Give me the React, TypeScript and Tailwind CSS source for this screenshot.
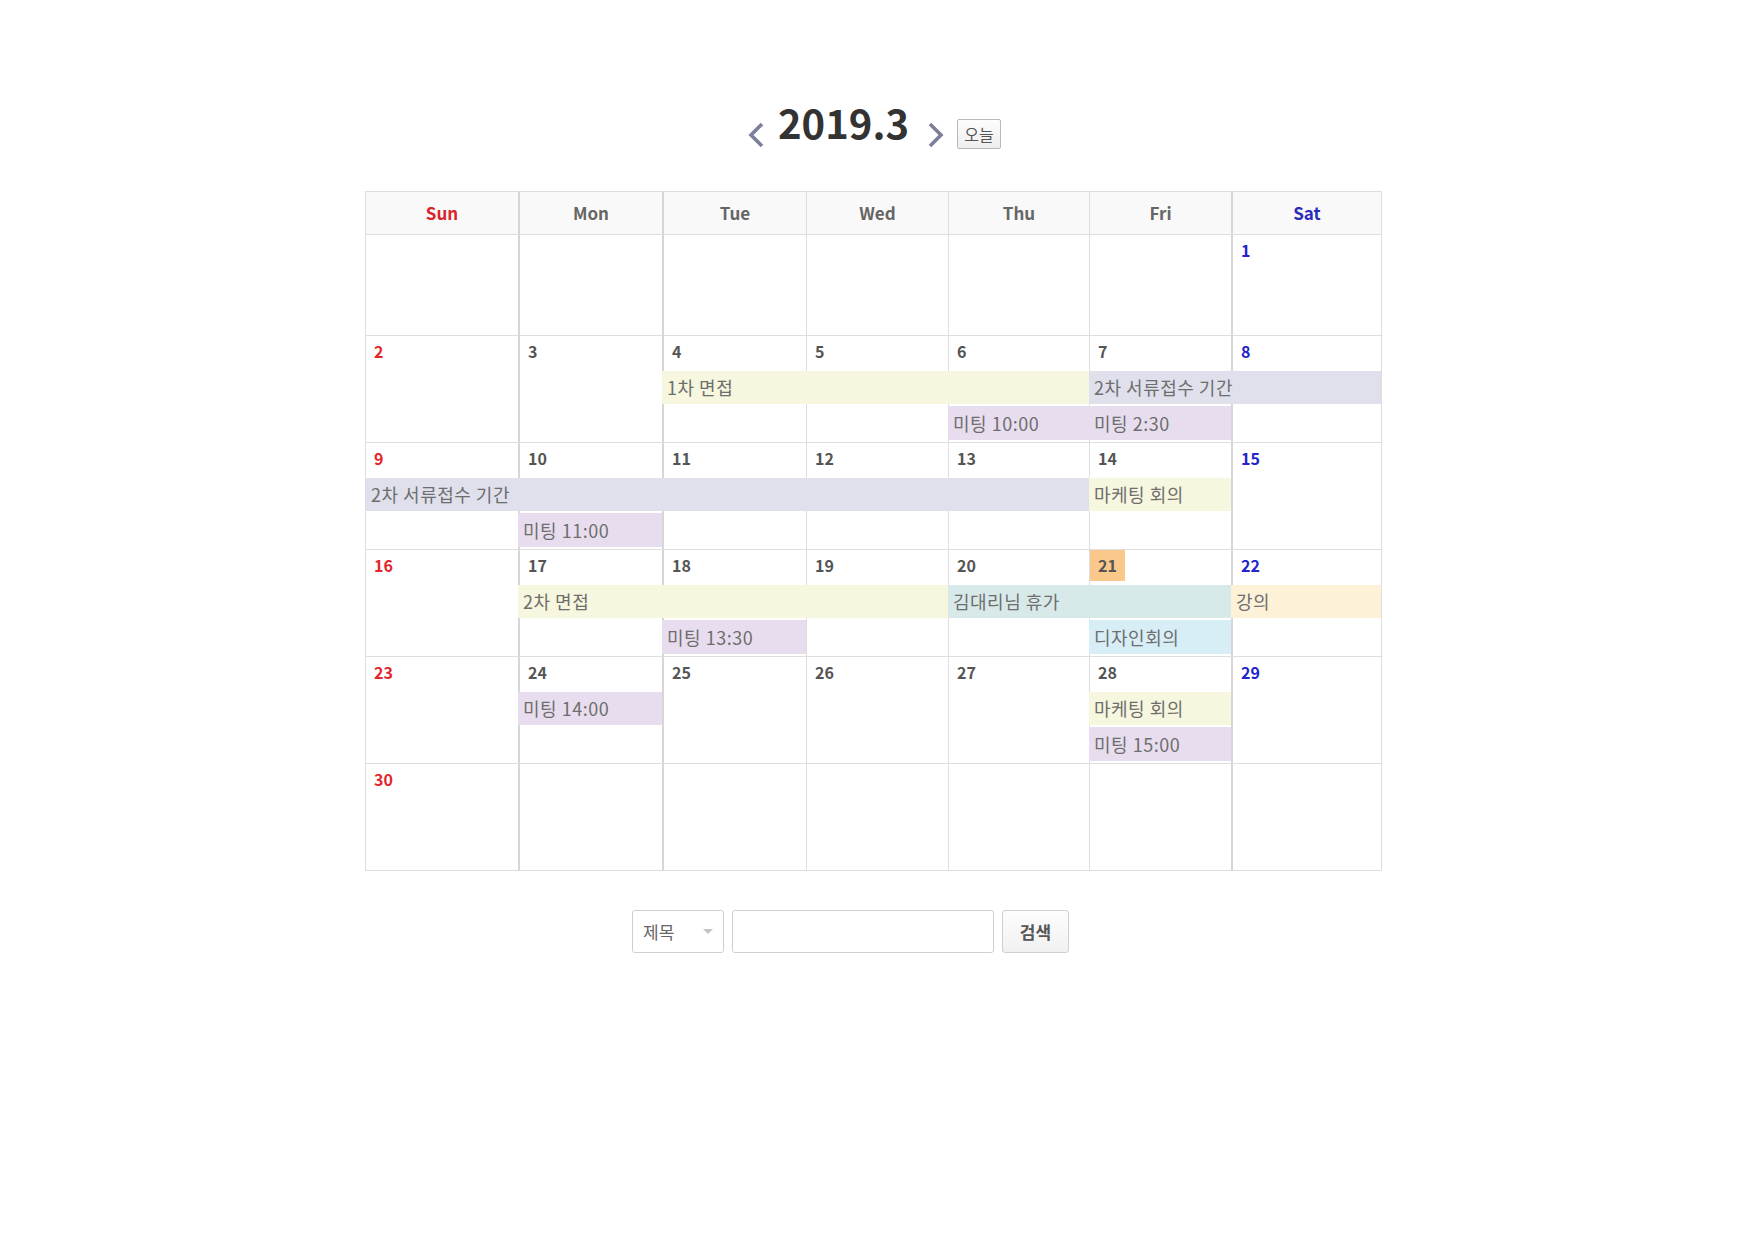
type CalEvent = { title: string; start: number; span: number; slot: 1 | 2; color: string };
type Week = { days: (number | null)[]; h: string; events: CalEvent[] };

const colStart = ["", "col-start-1", "col-start-2", "col-start-3", "col-start-4", "col-start-5", "col-start-6", "col-start-7"];
const colSpan = ["", "col-span-1", "col-span-2", "col-span-3", "col-span-4", "col-span-5"];

const yellow = "bg-[#f6f7de]";
const lavender = "bg-[#dfe0ec]";
const pink = "bg-[#e8ddee]";
const teal = "bg-[#d8e9e9]";
const sky = "bg-[#d7eef7]";
const peach = "bg-[#fdf2d8]";

const weeks: Week[] = [
  { days: [null, null, null, null, null, null, 1], h: "h-[100px]", events: [] },
  {
    days: [2, 3, 4, 5, 6, 7, 8],
    h: "h-[107px] border-t",
    events: [
      { title: "1차 면접", start: 3, span: 3, slot: 1, color: yellow },
      { title: "2차 서류접수 기간", start: 6, span: 2, slot: 1, color: lavender },
      { title: "미팅 10:00", start: 5, span: 1, slot: 2, color: pink },
      { title: "미팅 2:30", start: 6, span: 1, slot: 2, color: pink },
    ],
  },
  {
    days: [9, 10, 11, 12, 13, 14, 15],
    h: "h-[107px] border-t",
    events: [
      { title: "2차 서류접수 기간", start: 1, span: 5, slot: 1, color: lavender },
      { title: "마케팅 회의", start: 6, span: 1, slot: 1, color: yellow },
      { title: "미팅 11:00", start: 2, span: 1, slot: 2, color: pink },
    ],
  },
  {
    days: [16, 17, 18, 19, 20, 21, 22],
    h: "h-[107px] border-t",
    events: [
      { title: "2차 면접", start: 2, span: 3, slot: 1, color: yellow },
      { title: "김대리님 휴가", start: 5, span: 2, slot: 1, color: teal },
      { title: "강의", start: 7, span: 1, slot: 1, color: peach },
      { title: "미팅 13:30", start: 3, span: 1, slot: 2, color: pink },
      { title: "디자인회의", start: 6, span: 1, slot: 2, color: sky },
    ],
  },
  {
    days: [23, 24, 25, 26, 27, 28, 29],
    h: "h-[107px] border-t",
    events: [
      { title: "미팅 14:00", start: 2, span: 1, slot: 1, color: pink },
      { title: "마케팅 회의", start: 6, span: 1, slot: 1, color: yellow },
      { title: "미팅 15:00", start: 6, span: 1, slot: 2, color: pink },
    ],
  },
  { days: [30, null, null, null, null, null, null], h: "h-[107px] border-t", events: [] },
];

const dayNames = ["Sun", "Mon", "Tue", "Wed", "Thu", "Fri", "Sat"];

// left border per column: Mon, Tue and Sat lines are a bit heavier
const colBorder = [
  "",
  "border-l-2 border-[#d6d6d6]",
  "border-l-2 border-[#d6d6d6]",
  "border-l border-[#dedede]",
  "border-l border-[#dedede]",
  "border-l border-[#dedede]",
  "border-l-2 border-[#d6d6d6]",
];

const gridCols = "grid grid-cols-[152px_144px_144px_142px_141px_142px_150px]";

function dateColor(col: number) {
  if (col === 0) return "text-[#e3262b]";
  if (col === 6) return "text-[#2424cc]";
  return "text-[#555]";
}

function ChevronLeft() {
  return (
    <svg className="h-[26px] w-[16px]" viewBox="0 0 16 26" fill="none" stroke="#7b7f9b" strokeWidth={3.6}>
      <polyline points="14,2 3,13 14,24" />
    </svg>
  );
}

function ChevronRight() {
  return (
    <svg className="h-[26px] w-[16px]" viewBox="0 0 16 26" fill="none" stroke="#7b7f9b" strokeWidth={3.6}>
      <polyline points="2,2 13,13 2,24" />
    </svg>
  );
}

export default function App() {
  return (
    <div className="min-h-[1240px] bg-white pt-[102px] font-['Noto_Sans_CJK_KR','Noto_Sans',sans-serif] text-[#555]">
      {/* month header */}
      <div className="flex h-[50px] items-start justify-center pr-[6px]">
        <div className="mt-[20px] mr-[14px]">
          <ChevronLeft />
        </div>
        <div className="text-[40px] font-bold leading-[40px] text-[#333]">2019.3</div>
        <div className="mt-[20px] ml-[19px]">
          <ChevronRight />
        </div>
        <button className="mt-[17px] ml-[13px] flex h-[30px] w-[44px] items-center justify-center rounded-[2px] border border-[#b8b8b8] bg-gradient-to-b from-[#fdfdfd] to-[#eeeeee] text-[16px] text-[#555]">
          오늘
        </button>
      </div>

      {/* calendar */}
      <div className="mt-[39px] flex justify-center pr-[8px]">
        <div className="w-[1017px] border border-[#dedede]">
          <div className={`${gridCols} h-[43px] border-b border-[#dedede] bg-[#f9f9f9]`}>
            {dayNames.map((d, i) => (
              <div
                key={d}
                className={`flex items-center justify-center text-[17px] font-semibold ${colBorder[i]} ${
                  i === 0 ? "text-[#d6262b]" : i === 6 ? "text-[#2b2bbb]" : "text-[#666]"
                }`}
              >
                {d}
              </div>
            ))}
          </div>

          {weeks.map((w, wi) => (
            <div key={wi} className={`${gridCols} grid-rows-[35px_33px_36px_1fr] border-[#dedede] ${w.h}`}>
              {w.days.map((d, i) => (
                <div key={i} className={`${colStart[i + 1]} row-start-1 row-span-4 ${colBorder[i]}`}>
                  {d !== null && (
                    <span
                      className={`inline-block h-[31px] px-[8px] text-[16px] font-bold leading-[31px] ${dateColor(i)} ${
                        d === 21 ? "bg-[#fac88a]" : ""
                      }`}
                    >
                      {d}
                    </span>
                  )}
                </div>
              ))}
              {w.events.map((e, ei) => (
                <div
                  key={ei}
                  className={`${colStart[e.start]} ${colSpan[e.span]} ${
                    e.slot === 1 ? "row-start-2 h-[33px]" : "row-start-3 mt-[2px] h-[34px]"
                  } ${e.color} flex items-center whitespace-nowrap pl-[5px] text-[18px] tracking-[0.5px] text-[#6e6e6e]`}
                >
                  {e.title}
                </div>
              ))}
            </div>
          ))}
        </div>
      </div>

      {/* search */}
      <div className="mt-[39px] flex justify-center gap-[8px] pr-[54px]">
        <div className="flex h-[43px] w-[92px] items-center justify-between rounded-[3px] border border-[#cfcfcf] bg-white pl-[10px] pr-[10px]">
          <span className="text-[17px] text-[#666]">제목</span>
          <span className="h-0 w-0 border-l-[5px] border-r-[5px] border-t-[5px] border-l-transparent border-r-transparent border-t-[#c4c4c4]" />
        </div>
        <input className="h-[43px] w-[262px] rounded-[3px] border border-[#cfcfcf] bg-white px-[8px] outline-none" />
        <button className="h-[43px] w-[67px] rounded-[3px] border border-[#cfcfcf] bg-gradient-to-b from-[#fdfdfd] to-[#f1f1f1] text-[17px] font-bold text-[#555]">
          검색
        </button>
      </div>
    </div>
  );
}
